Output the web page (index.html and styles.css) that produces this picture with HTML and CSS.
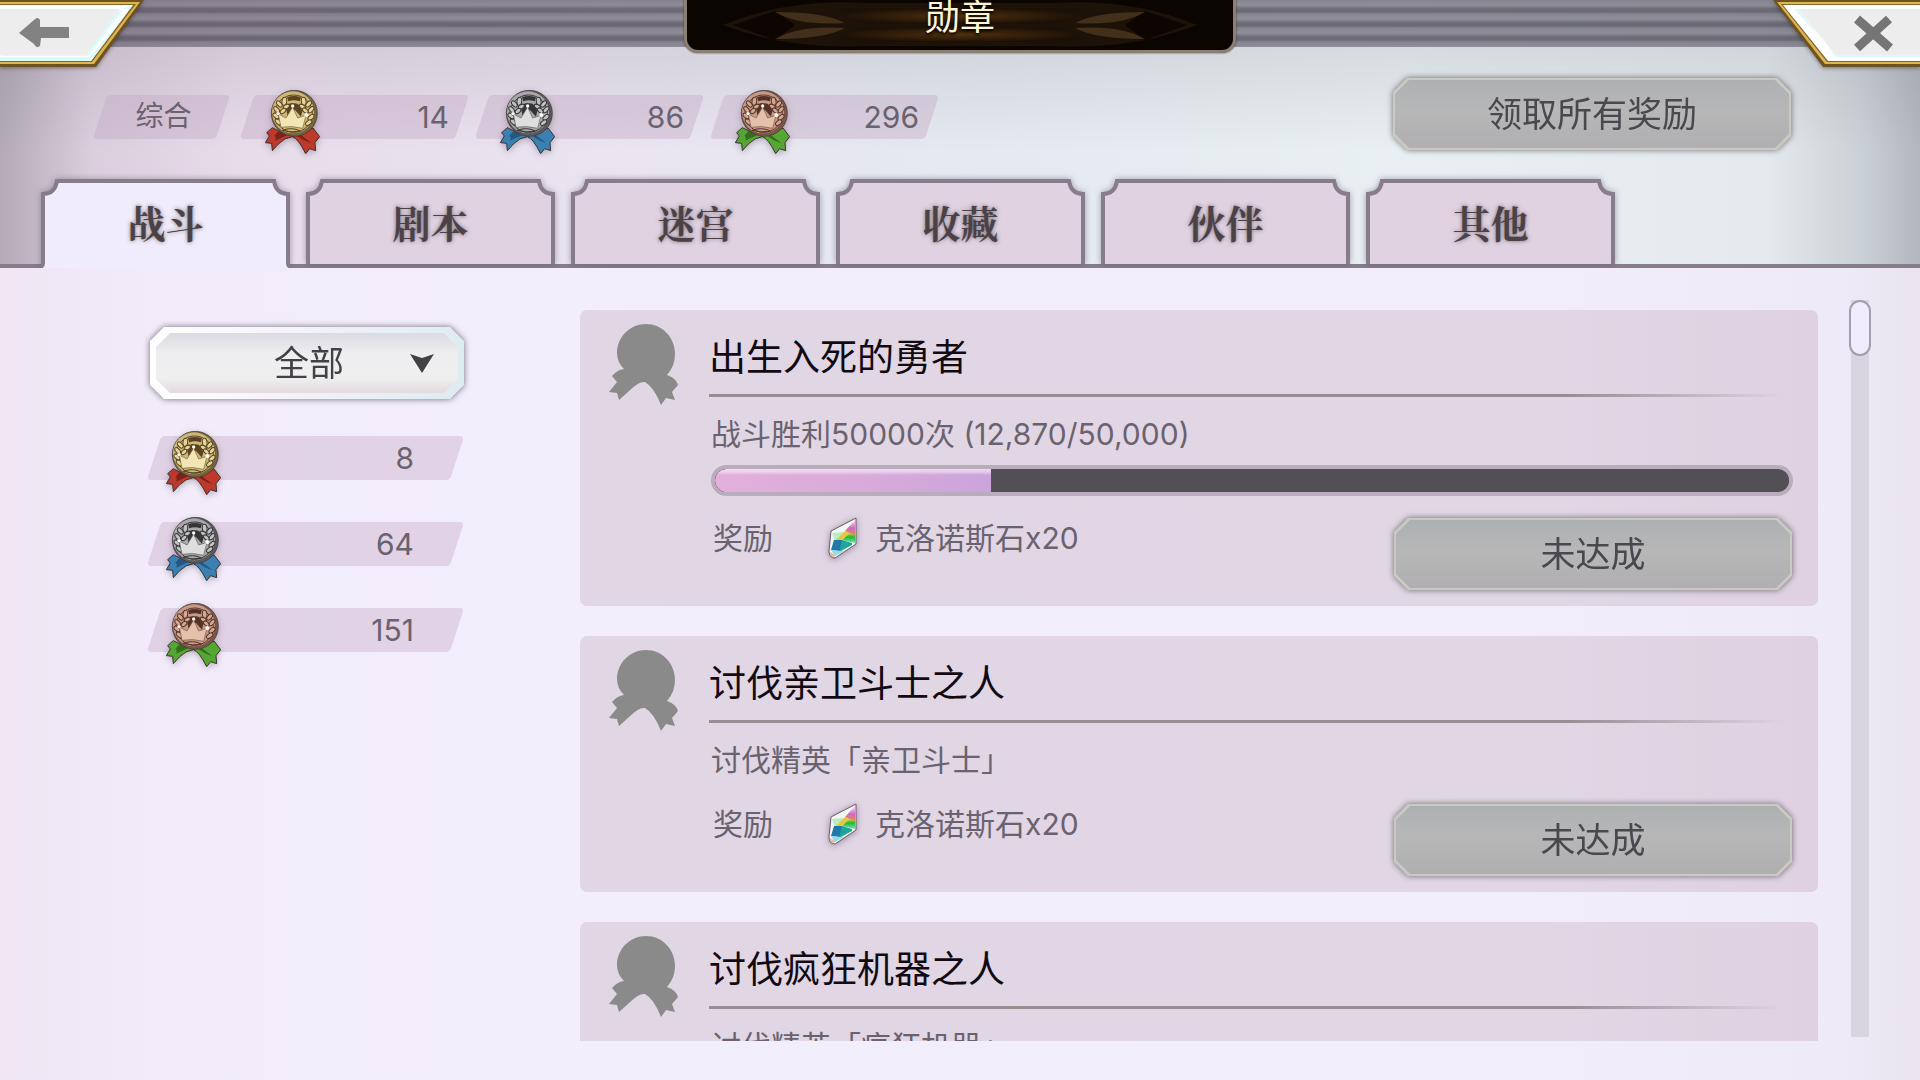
FILE: index.html
```html
<!DOCTYPE html>
<html lang="zh-CN">
<head>
<meta charset="utf-8">
<meta name="viewport" content="width=device-width, initial-scale=1">
<title>勋章</title>
<link rel="stylesheet" href="styles.css">
</head>
<body>
<svg class="defs" aria-hidden="true">
  <defs>
    <symbol id="medal" viewBox="0 0 165 192">
      <path class="m-ribbon" d="M22 113 L5 128 L13 138 L1 158 L20 160 L22 182 L40 162 Q60 142 82 140 Q100 146 122 191 L134 176 L152 182 L150 158 L164 140 L144 114 L110 130 L55 130Z"/>
      <path class="m-fold" d="M40 124 L66 136 L30 152 Q36 142 28 138Z M106 134 L140 160 L120 152 Q104 144 98 138Z"/>
      <circle class="m-rim" cx="88" cy="70" r="69"/>
      <circle class="m-face" cx="84" cy="67" r="63"/>
      <circle class="m-line" cx="86" cy="71" r="56"/>
      <path class="m-dark" d="M66 22 Q86 14 108 22 L104 34 Q86 28 70 34Z M64 60 Q68 34 86 40 Q104 36 112 62 L108 80 L90 60 L78 62 L68 78Z"/>
      <g class="m-leaf">
        <ellipse cx="58" cy="34" rx="7" ry="12" transform="rotate(8 58 34)"/>
        <ellipse cx="43" cy="42" rx="6" ry="11" transform="rotate(-42 43 42)"/>
        <ellipse cx="64" cy="50" rx="6" ry="10" transform="rotate(60 64 50)"/>
        <ellipse cx="35" cy="59" rx="6" ry="11" transform="rotate(-42 35 59)"/>
        <ellipse cx="54" cy="63" rx="6" ry="10" transform="rotate(50 54 63)"/>
        <ellipse cx="33" cy="78" rx="6" ry="11" transform="rotate(-48 33 78)"/>
        <ellipse cx="40" cy="96" rx="6" ry="11" transform="rotate(-50 40 96)"/>
        <ellipse cx="116" cy="34" rx="7" ry="12" transform="rotate(-8 116 34)"/>
        <ellipse cx="131" cy="42" rx="6" ry="11" transform="rotate(42 131 42)"/>
        <ellipse cx="112" cy="50" rx="6" ry="10" transform="rotate(-60 112 50)"/>
        <ellipse cx="138" cy="59" rx="6" ry="11" transform="rotate(42 138 59)"/>
        <ellipse cx="121" cy="62" rx="6" ry="10" transform="rotate(-50 121 62)"/>
        <ellipse cx="138" cy="82" rx="6" ry="11" transform="rotate(48 138 82)"/>
        <ellipse cx="131" cy="98" rx="6" ry="11" transform="rotate(50 131 98)"/>
      </g>
      <path class="m-crown" d="M40 72 L63 84 L83 51 L98 84 L123 76 L113 115 Q80 106 48 112Z"/>
      <circle class="m-gem" cx="83" cy="48" r="5"/>
      <circle class="m-gem" cx="39" cy="71" r="5"/>
      <circle class="m-gem" cx="124" cy="75" r="6"/>
      <path class="m-line" d="M52 121 Q80 110 106 123 Q80 130 52 121Z"/>
    </symbol>
    <symbol id="ribbon" viewBox="0 0 69 81">
      <path d="M37 0 C53 0 66 13 66 30 Q66 42 58 51 Q67 54 69 61 L63 68 L66 76 L57 74 L52 81 Q45 63 36 58 Q30 57 20 67 L10 76 L8 69 L0 68 L8 58 L3 52 Q8 46 15 45 Q8 38 8 29 C8 13 21 0 37 0Z"/>
    </symbol>
    <linearGradient id="gemPink" x1="0" y1="0" x2="0" y2="1">
      <stop offset="0" stop-color="#f9e4f6"/><stop offset=".5" stop-color="#d467c6"/><stop offset="1" stop-color="#e8903c"/>
    </linearGradient>
    <linearGradient id="gemGreen" x1="0" y1="0" x2="0" y2="1">
      <stop offset="0" stop-color="#d8d21f"/><stop offset=".4" stop-color="#1fb83a"/><stop offset="1" stop-color="#7be0b0"/>
    </linearGradient>
    <symbol id="gem" viewBox="0 0 32 42">
      <path d="M30 1 L5 14 L3 34 Q3 41 9 41 L30 27Z" fill="#f3f7f4"/>
      <path d="M29 3 L19 14 L29 19Z" fill="url(#gemPink)"/>
      <path d="M17 15 L6 16 L9 24 L17 20Z" fill="#b9ebc6"/>
      <path d="M19 14 L25 17 L15 23 L10 23Z" fill="#e9c53a"/>
      <path d="M24 16 L29 18 L29 26 L16 23Z" fill="url(#gemGreen)"/>
      <path d="M8 23 L17 23 L14 34 L5 33Z" fill="#1f78a8"/>
      <path d="M16 23 L26 26 L26 28 L13 35Z" fill="#1fa59c"/>
      <path d="M5 33 L14 34 L18 34 L9 39Z" fill="#8fdcec"/>
      <path d="M4 35 L9 38 L8 40Q4 40 4 35Z" fill="#e8b79a"/>
      <path d="M30 1 L5 14 L3 34 Q3 41 9 41 L30 27Z" fill="none" stroke="#6b5b66" stroke-width="1"/>
    </symbol>
    <symbol id="tab" viewBox="0 0 249 85">
      <path class="tab-fill" d="M2 85 V15 Q14 15 16 2 H233 Q235 15 247 15 V85Z"/>
      <path class="tab-line" d="M2 85 V15 Q14 15 16 2 H233 Q235 15 247 15 V85"/>
    </symbol>
    <symbol id="tab-open" viewBox="0 0 249 89">
      <path class="tab-fill" d="M2 89 V15 Q14 15 16 2 H233 Q235 15 247 15 V89Z"/>
      <path class="tab-line" d="M0 87 Q2 87 2 84 V15 Q14 15 16 2 H233 Q235 15 247 15 V84 Q247 87 249 87"/>
    </symbol>
  </defs>
</svg>

<header class="topbar">
  <button class="corner back" type="button" aria-label="返回">
    <svg width="150" height="72" viewBox="0 0 150 72" aria-hidden="true">
      <path d="M0 0 H144 L96 67 H0Z" fill="#6f5222"/>
      <path d="M0 2 H140 L94 64 H0Z" fill="#dcb64e"/>
      <path d="M0 4 H136 L92 62 H0Z" fill="#86662a"/>
      <path d="M0 5 H133 L91 61 H0Z" fill="#fff"/>
      <path d="M122 9 H130 L90 57 H0 V61 H91 L133 5Z M0 56 H88 L124 9" fill="#d9fbfb"/>
      <path d="M0 9 H120 L86 55 H0Z" fill="#ededed"/>
      <path d="M69 27 V38 H41 L40 46 Q36 49 34 44 L19 33 L34 20 Q38 16 40 20 V27Z" fill="#828282"/>
    </svg>
  </button>
  <div class="plate">
    <svg class="plate-art" viewBox="0 0 546 50" aria-hidden="true">
      <defs>
        <radialGradient id="sheen" cx=".5" cy=".5" r=".5">
          <stop offset="0" stop-color="#50300f"/><stop offset="1" stop-color="#1c1006"/>
        </radialGradient>
      </defs>
      <path d="M36 25 Q100 -2 180 3 H366 Q446 -2 510 25 Q446 50 366 46 H180 Q100 50 36 25Z" fill="#1d1208"/>
      <path d="M46 25 L88 11 L108 25 L88 40Z M500 25 L458 11 L438 25 L458 40Z" fill="#0c0502"/>
      <g fill="url(#sheen)">
        <path d="M150 8 H396 Q382 22 366 24 H180 Q164 22 150 8Z"/>
        <path d="M180 27 H366 Q382 29 396 42 H150 Q164 29 180 27Z"/>
      </g>
      <g fill="#43301b">
        <path d="M88 12 Q138 12 158 23 Q112 26 88 12Z M88 39 Q138 39 158 28 Q112 25 88 39Z"/>
        <path d="M458 12 Q408 12 388 23 Q434 26 458 12Z M458 39 Q408 39 388 28 Q434 25 458 39Z"/>
      </g>
    </svg>
    <h1>勋章</h1>
  </div>
  <button class="corner close" type="button" aria-label="关闭">
    <svg width="150" height="72" viewBox="0 0 150 72" aria-hidden="true">
      <path d="M150 0 H3 L53 67 H150Z" fill="#6f5222"/>
      <path d="M150 2 H7 L55 64 H150Z" fill="#dcb64e"/>
      <path d="M150 4 H11 L57 62 H150Z" fill="#86662a"/>
      <path d="M150 5 H13 L58 61 H150Z" fill="#fff"/>
      <path d="M16 9 L28 9 L66 57 H150 V55 H66 L24 9Z" fill="#d9fbfb"/>
      <path d="M150 9 H28 L66 55 H150Z" fill="#ededed"/>
      <path d="M87 19 L120 48 M119 19 L87 48" stroke="#757575" stroke-width="9" fill="none"/>
    </svg>
  </button>
</header>

<section class="summary" aria-label="综合">
  <div class="totals">
    <span class="pill pill-label"><span>综合</span></span>
    <span class="pill pill-count gold"><svg class="medal"><use href="#medal"/></svg><span>14</span></span>
    <span class="pill pill-count silver"><svg class="medal"><use href="#medal"/></svg><span>86</span></span>
    <span class="pill pill-count bronze"><svg class="medal"><use href="#medal"/></svg><span>296</span></span>
  </div>
  <button class="btn" type="button"><span>领取所有奖励</span></button>
</section>

<nav class="tabs" aria-label="分类">
  <button class="tab active" type="button" aria-current="page"><svg><use href="#tab-open"/></svg><span>战斗</span></button>
  <button class="tab" type="button"><svg><use href="#tab"/></svg><span>剧本</span></button>
  <button class="tab" type="button"><svg><use href="#tab"/></svg><span>迷宫</span></button>
  <button class="tab" type="button"><svg><use href="#tab"/></svg><span>收藏</span></button>
  <button class="tab" type="button"><svg><use href="#tab"/></svg><span>伙伴</span></button>
  <button class="tab" type="button"><svg><use href="#tab"/></svg><span>其他</span></button>
</nav>

<main class="panel">
  <aside class="side">
    <div class="filter">
      <select aria-label="筛选">
        <option>全部</option>
      </select>
      <svg class="caret" viewBox="0 0 24 19" aria-hidden="true"><path d="M0 0 L12 4 L24 0 L12 19Z"/></svg>
    </div>
    <ul class="counts">
      <li class="pill gold"><svg class="medal"><use href="#medal"/></svg><span>8</span></li>
      <li class="pill silver"><svg class="medal"><use href="#medal"/></svg><span>64</span></li>
      <li class="pill bronze"><svg class="medal"><use href="#medal"/></svg><span>151</span></li>
    </ul>
  </aside>

  <div class="list">
    <article class="card">
      <svg class="badge" aria-hidden="true"><use href="#ribbon"/></svg>
      <div class="body">
        <h2>出生入死的勇者</h2>
        <p class="desc">战斗胜利50000次 (12,870/50,000)</p>
        <progress value="12870" max="50000" aria-label="战斗胜利"></progress>
        <div class="reward">
          <span class="reward-label">奖励</span>
          <svg class="gem" aria-hidden="true"><use href="#gem"/></svg>
          <span class="reward-name">克洛诺斯石x20</span>
          <button class="btn" type="button"><span>未达成</span></button>
        </div>
      </div>
    </article>
    <article class="card">
      <svg class="badge" aria-hidden="true"><use href="#ribbon"/></svg>
      <div class="body">
        <h2>讨伐亲卫斗士之人</h2>
        <p class="desc">讨伐精英「亲卫斗士」</p>
        <div class="reward">
          <span class="reward-label">奖励</span>
          <svg class="gem" aria-hidden="true"><use href="#gem"/></svg>
          <span class="reward-name">克洛诺斯石x20</span>
          <button class="btn" type="button"><span>未达成</span></button>
        </div>
      </div>
    </article>
    <article class="card">
      <svg class="badge" aria-hidden="true"><use href="#ribbon"/></svg>
      <div class="body">
        <h2>讨伐疯狂机器之人</h2>
        <p class="desc">讨伐精英「疯狂机器」</p>
      </div>
    </article>
  </div>

  <div class="scroll" aria-hidden="true"><div class="thumb"></div></div>
</main>
</body>
</html>
```
FILE: styles.css
```css
* { box-sizing: border-box; }

body {
  margin: 0;
  height: 100vh;
  display: flex;
  flex-direction: column;
  overflow: hidden;
  font-family: Inter, "Noto Sans CJK SC", sans-serif;
  font-weight: 400;
  color: #6a626e;
  background:
    linear-gradient(rgba(70, 70, 80, .12) 47px, rgba(70, 70, 80, 0) 150px),
    linear-gradient(90deg, #b3aab6 0, #dacddc 90px, #e8dcea 240px, #eae4f0 600px, #e4eaf0 1000px, #e9f0f3 1400px, #e4eaee 92%, #cad1d6 97%, #b1b7bd 100%);
}

h1, h2, p, ul { margin: 0; padding: 0; font-weight: inherit; }

button, select {
  margin: 0;
  padding: 0;
  border: 0;
  background: none;
  font: inherit;
  color: inherit;
}

.defs { position: absolute; width: 0; height: 0; }

/* top bar */
.topbar {
  display: grid;
  grid-template-columns: 1fr 552px 1fr;
  align-items: start;
  height: 47px;
  flex: none;
  background: repeating-linear-gradient(rgba(86, 80, 96, .62) 0, rgba(100, 98, 110, .62) 5px, rgba(68, 64, 78, .72) 9px, rgba(68, 64, 78, .72) 12px, rgba(86, 80, 96, .62) 14px);
  position: relative;
  z-index: 1;
}

.corner { width: 150px; height: 72px; filter: drop-shadow(0 1px 2px rgba(40, 30, 30, .5)); }
.corner svg { display: block; }
.close { justify-self: end; }

.plate {
  position: relative;
  height: 53px;
  border: 3px solid #8c7f74;
  border-top: 0;
  border-radius: 0 0 14px 14px;
  background: #0b0502;
  box-shadow: 0 0 2px #3a2c22;
}

.plate-art { position: absolute; inset: 0; width: 100%; height: 100%; }

.plate h1 {
  position: relative;
  text-align: center;
  font-size: 35px;
  line-height: 34px;
  color: #fdf6d6;
  text-shadow: 0 2px 3px #000;
}

/* totals */
.summary {
  display: flex;
  align-items: flex-start;
  justify-content: space-between;
  height: 132px;
  flex: none;
  padding: 30px 128px 0 93px;
}

.totals { display: flex; gap: 6px; padding-top: 18px; }

.pill {
  position: relative;
  display: flex;
  align-items: center;
  justify-content: flex-end;
  height: 44px;
  font-size: 30px;
  isolation: isolate;
}

.pill::before {
  content: "";
  position: absolute;
  inset: 0 7px;
  z-index: -1;
  border-radius: 4px;
  background: rgba(196, 168, 194, .4);
  transform: skewX(-18deg);
}

.pill-label { width: 137px; margin-right: 4px; justify-content: center; font-size: 28px; line-height: 40px; padding: 0 0 2px 4px; }
.pill-count { width: 229px; padding: 0 20px 0 25px; }

.medal {
  width: 55px;
  height: 64px;
  flex: none;
  margin: 0 auto -10px 0;
  filter: drop-shadow(0 2px 3px rgba(60, 40, 60, .3));
}

.m-ribbon { fill: var(--ribbon); stroke: #3c3030; stroke-width: 3; }
.m-fold { fill: var(--fold); }
.m-rim { fill: var(--rim); stroke: #3c3030; stroke-width: 2; }
.m-face { fill: var(--face); }
.m-line { fill: none; stroke: var(--dark); stroke-width: 3; }
.m-dark { fill: var(--dark); }
.m-leaf { fill: var(--leaf); stroke: var(--dark); stroke-width: 3; }
.m-crown { fill: var(--crown); stroke: var(--rim); stroke-width: 2; }
.m-gem { fill: #fffdf2; }

.gold { --ribbon: #bb3a2c; --fold: #7d2019; --rim: #75653f; --face: #cdb878; --dark: #5a4222; --leaf: #e6d59a; --crown: #f4e6b4; }
.silver { --ribbon: #3a80b2; --fold: #24587e; --rim: #5a5a5c; --face: #a9a9ab; --dark: #353537; --leaf: #c2c2c4; --crown: #dededf; }
.bronze { --ribbon: #56a633; --fold: #326e1d; --rim: #7a5549; --face: #c69a86; --dark: #553228; --leaf: #d3a892; --crown: #e5c0ab; }

/* grey octagonal button */
.btn {
  position: relative;
  width: 400px;
  height: 74px;
  flex: none;
  isolation: isolate;
  font-size: 35px;
  line-height: 72px;
  color: #4a484e;
  filter: drop-shadow(0 0 3px rgba(70, 65, 70, .75));
}

.btn::before, .btn::after {
  content: "";
  position: absolute;
  z-index: -1;
  clip-path: polygon(14px 0, calc(100% - 14px) 0, 100% 14px, 100% calc(100% - 14px), calc(100% - 14px) 100%, 14px 100%, 0 calc(100% - 14px), 0 14px);
}

.btn::before { inset: 1px; background: #c9cac3; }
.btn::after { inset: 3px; background: linear-gradient(#adb0b2, #b7b7b8 45%, #b0aeb0); }

/* tabs */
.tabs {
  display: flex;
  gap: 16px;
  flex: none;
  height: 89px;
  padding-left: 41px;
  border-bottom: 4px solid #877c8b;
  position: relative;
}

.tab {
  position: relative;
  width: 249px;
  height: 85px;
  flex: none;
  font-family: "Noto Serif CJK SC", "Noto Sans CJK SC", serif;
  font-size: 38px;
  font-weight: 700;
  color: #4b4247;
  text-shadow: 0 0 4px rgba(75, 66, 71, .7);
  --fill: #e0d2e1;
}

.tab svg {
  position: absolute;
  left: 0;
  top: 0;
  width: 249px;
  height: 85px;
  filter: drop-shadow(0 0 3px rgba(90, 80, 95, .5));
}

.tab span { position: relative; }
.tab.active { --fill: #f1ecfb; }
.tab.active svg { height: 89px; }
.tab-fill { fill: var(--fill); }
.tab-line { fill: none; stroke: #877c8b; stroke-width: 4; }

/* content panel */
.panel {
  position: relative;
  display: flex;
  align-items: stretch;
  flex: 1;
  min-height: 0;
  padding: 32px 49px 39px 147px;
  background: linear-gradient(90deg, #f0e6f4 0, #f1ebfa 160px, #f3eefc 600px, #f2edfb 80%, #eeeaf7 96%, #e9e4ee 100%);
}

.side { width: 317px; flex: none; padding-top: 26px; }

.filter {
  position: relative;
  height: 74px;
  margin-left: 3px;
  isolation: isolate;
  filter: drop-shadow(0 0 3px rgba(70, 60, 80, .75));
}

.filter::before, .filter::after {
  content: "";
  position: absolute;
  z-index: -1;
  clip-path: polygon(14px 0, calc(100% - 14px) 0, 100% 14px, 100% calc(100% - 14px), calc(100% - 14px) 100%, 14px 100%, 0 calc(100% - 14px), 0 14px);
}

.filter::before { inset: 1px 0; background: linear-gradient(100deg, #fff 0, #f6f4fa 40%, #dcecf1 100%); }
.filter::after { inset: 7px 6px; background: linear-gradient(#dcdbe2, #eeedef 35%, #f0eff0 75%, #e2dade); }

.filter select {
  width: 100%;
  height: 100%;
  padding-left: 4px;
  appearance: none;
  font-size: 35px;
  color: #434145;
  text-align-last: center;
}

.caret {
  position: absolute;
  right: 30px;
  top: 28px;
  width: 24px;
  height: 19px;
  fill: #434145;
  pointer-events: none;
}

.counts { list-style: none; padding-top: 36px; display: grid; gap: 42px; }
.counts .pill { padding: 0 50px 0 19px; }
.counts .pill::before { background: rgba(196, 168, 194, .38); }

.list {
  flex: 1;
  min-width: 0;
  margin-left: 116px;
  padding-top: 10px;
  overflow-y: auto;
  scrollbar-width: none;
  display: flex;
  flex-direction: column;
  gap: 30px;
}

.card {
  display: flex;
  flex: none;
  padding: 14px 25px 15px 29px;
  border-radius: 7px;
  background: linear-gradient(90deg, #e0d6e4, #e2d6e5 40%, #e0d6e4 80%, #dfd1e1);
}

.badge { width: 69px; height: 81px; flex: none; fill: #8a8a8a; }
.body { flex: 1; min-width: 0; padding-left: 31px; }

.card h2 {
  height: 73px;
  padding-top: 8px;
  margin-right: 10px;
  font-size: 37px;
  line-height: 52px;
  color: #120a12;
  background: linear-gradient(90deg, #978d93 80%, rgba(151, 141, 147, 0)) left bottom / 100% 3px no-repeat;
}

.desc {
  padding: 14px 0 0 2px;
  font-size: 30px;
  line-height: 46px;
}

progress {
  display: block;
  appearance: none;
  width: calc(100% - 2px);
  height: 31px;
  margin: 8px 0 0 2px;
  padding: 0;
  border: 4px solid #b9adbd;
  border-radius: 16px;
  overflow: hidden;
  background: #525054;
}

progress::-webkit-progress-bar { background: #525054; border-radius: 12px; }
progress::-webkit-progress-value {
  border-radius: 12px 0 0 12px;
  background: linear-gradient(rgba(255, 240, 250, .7) 0, rgba(255, 240, 250, .5) 3px, transparent 6px), linear-gradient(90deg, #e2b0da, #d9abda 50%, #cba4dc);
}

.reward {
  display: flex;
  align-items: flex-start;
  padding: 21px 0 0 4px;
  font-size: 30px;
  line-height: 42px;
}

.desc + .reward { padding-top: 20px; }
.reward-label { width: 113px; }
.gem { width: 32px; height: 42px; margin-right: 17px; filter: drop-shadow(0 1px 3px rgba(80, 60, 90, .5)); }
.reward .btn { margin-left: auto; }

/* scrollbar */
.scroll {
  width: 22px;
  flex: none;
  margin: 0 0 4px 31px;
  background: linear-gradient(#d8d4e0, #d8d4e0) center / 18px 100% no-repeat;
}

.thumb {
  height: 56px;
  border: 2px solid #a39eac;
  border-radius: 11px;
  background: #f1ecfb;
}
```
